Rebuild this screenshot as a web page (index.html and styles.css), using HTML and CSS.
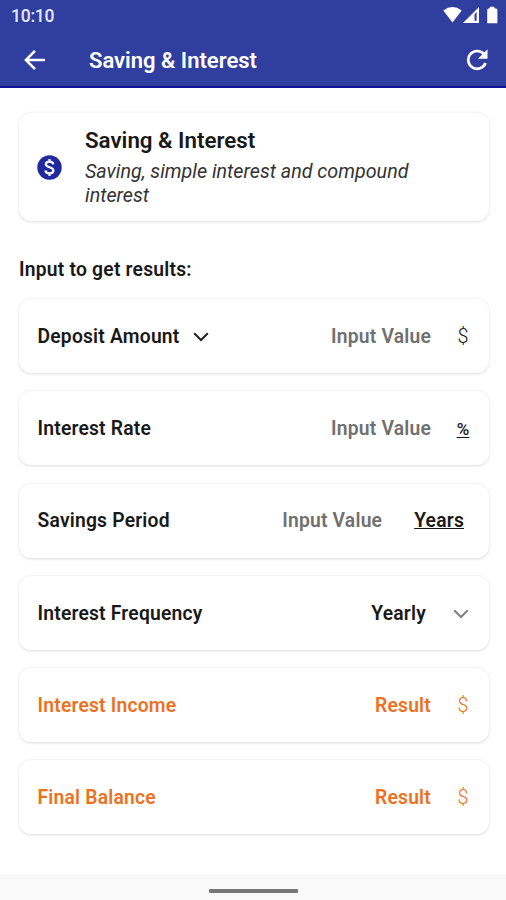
FILE: index.html
```html
<!DOCTYPE html>
<html lang="en">
<head>
<meta charset="utf-8">
<title>Saving &amp; Interest</title>
<link rel="stylesheet" href="styles.css">
</head>
<body>
<div class="screen">
  <header class="header">
    <div class="status">
      <span class="time">10:10</span>
      <svg class="status-icons" width="56" height="20" viewBox="0 0 56 20" fill="#fff">
        <path d="M0.3 4.5Q9.5-2.3 18.7 4.5L9.5 16.5Z"/>
        <path fill-rule="evenodd" d="M36 1V17H20ZM31.5 8.2V14.8H33.6V6Z"/>
        <path d="M46.8 0.7H51.4V2.3Q54.4 2.3 54.4 4V17.2H44.2V4Q44.2 2.3 46.8 2.3Z"/>
      </svg>
    </div>
    <div class="toolbar">
      <svg class="back" width="22" height="22" viewBox="0 0 22 22"><path d="M21 11H2.5M11 1.9L1.9 11L11 20.1"/></svg>
      <h1 class="title">Saving &amp; Interest</h1>
      <svg class="refresh" width="22" height="22" viewBox="0 0 22 22"><path class="arc" d="M18 5.2A8.9 8.9 0 1 0 19.5 14"/><path class="tip" d="M21.5 0.2V9.7H12Z"/></svg>
    </div>
  </header>
  <main class="content">
    <section class="card info">
      <svg class="coin" width="25" height="25" viewBox="0 0 25 25"><circle cx="12.5" cy="12.5" r="12.2"/><path d="M16.3 9.4C16 7.4 14.7 6.6 12.5 6.6S8.8 7.7 8.8 9.3C8.8 13 16.4 11.5 16.4 15.5C16.4 17.4 14.8 18.4 12.5 18.4S8.6 17.4 8.4 15.3M12.5 4V7M12.5 18V21"/></svg>
      <div>
        <h2 class="info-title">Saving &amp; Interest</h2>
        <p class="info-text">Saving, simple interest and compound interest</p>
      </div>
    </section>
    <h3 class="prompt">Input to get results:</h3>
    <div class="rows">
      <div class="card row"><span>Deposit Amount</span><svg class="chevron label-chevron" width="16" height="10" viewBox="0 0 16 10"><path d="M1.2 1.3L8 8L14.8 1.3"/></svg><span class="value hint">Input Value</span><span class="unit">$</span></div>
      <div class="card row"><span>Interest Rate</span><span class="value hint">Input Value</span><span class="unit percent">%</span></div>
      <div class="card row"><span>Savings Period</span><span class="value hint">Input Value</span><span class="years">Years</span></div>
      <div class="card row"><span>Interest Frequency</span><span class="value frequency">Yearly</span><svg class="chevron muted" width="16" height="10" viewBox="0 0 16 10"><path d="M1.2 1.3L8 8L14.8 1.3"/></svg></div>
      <div class="card row result"><span>Interest Income</span><span class="value">Result</span><span class="unit">$</span></div>
      <div class="card row result"><span>Final Balance</span><span class="value">Result</span><span class="unit">$</span></div>
    </div>
  </main>
  <footer class="navbar"><div class="handle"></div></footer>
</div>
</body>
</html>
```
FILE: styles.css
```css
* { box-sizing: border-box; }
body { margin: 0; font-family: Roboto, "Liberation Sans", sans-serif; color: #191919; background: #fff; }
h1, h2, h3, p { margin: 0; font-weight: 600; }
svg { display: block; flex: none; }
.screen { width: 506px; height: 900px; display: flex; flex-direction: column; overflow: hidden; }
.header { height: 88px; flex: none; background: #303f9f; border-bottom: 2px solid #10109a; color: #fff; }
.status { height: 32px; display: flex; justify-content: space-between; align-items: flex-start; padding: 6px 9px 0 11px; }
.time { font-size: 17.5px; line-height: 20px; color: #e6e8fa; font-weight: 500; letter-spacing: -0.25px; }
.status-icons { width: 56px; margin-right: -2px; }
.toolbar { height: 56px; display: flex; align-items: center; padding: 0 18px 0 24px; }
.back { fill: none; stroke: #fff; stroke-width: 2.5; }
.title { flex: 1; margin-left: 43px; padding-top: 1px; font-size: 22px; line-height: 26px; }
.refresh .arc { fill: none; stroke: #fff; stroke-width: 2.7; }
.refresh .tip { fill: #fff; }
.content { flex: 1; padding: 25px 17px 0 19px; }
.card { background: #fff; border-radius: 12px; box-shadow: 0 0 2px 1px rgba(0,0,0,.055), 0 2px 2px rgba(0,0,0,.06); }
.info { height: 108px; display: flex; align-items: center; padding: 0 60px 0 17.5px; }
.coin { margin: 0 23.5px 0 0; }
.coin circle { fill: #2029a0; }
.coin path { fill: none; stroke: #fff; stroke-width: 2.2; }
.info-title { font-size: 22.3px; line-height: 26px; }
.info-text { margin-top: 7px; font-size: 19.7px; line-height: 24px; font-style: italic; font-weight: 400; color: #333; }
.prompt { margin: 37px 0 18px; font-size: 19.3px; line-height: 23px; letter-spacing: 0.22px; }
.rows { display: flex; flex-direction: column; gap: 18.3px; }
.row { height: 74px; display: flex; align-items: center; padding: 1.5px 18px 0 18.5px; font-size: 19.3px; line-height: 24px; font-weight: 600; letter-spacing: 0.2px; }
.label-chevron { margin-left: 13px; }
.chevron path { fill: none; stroke: #222; stroke-width: 2; }
.muted { margin: 0 2px 0 27px; }
.muted path { stroke: #808080; }
.value { margin-left: auto; }
.hint { color: #707070; }
.unit { width: 16px; margin-left: 24px; text-align: center; font-weight: 350; font-size: 19.8px; }
.percent { font-size: 17px; font-weight: 500; text-decoration: underline; text-decoration-thickness: 1px; text-underline-offset: 2px; }
.years { margin: 0 7px 0 32px; text-decoration: underline; text-underline-offset: 1px; text-decoration-thickness: 1px; }
.result { color: #ee711d; }
.navbar { height: 26px; flex: none; background: #f9f9f9; display: flex; justify-content: center; padding-top: 15px; }
.handle { width: 89px; height: 4px; border-radius: 1px; background: #777; }
```
